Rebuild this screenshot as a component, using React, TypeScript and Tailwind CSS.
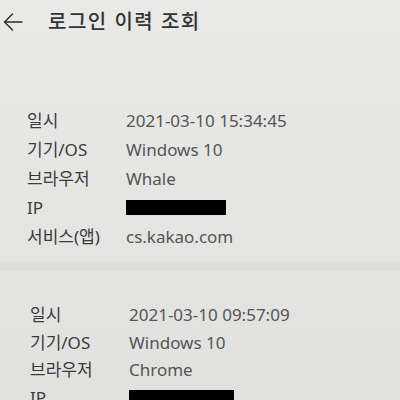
type LoginRecord = {
  time: string;
  device: string;
  browser: string;
  service?: string;
};

const records: LoginRecord[] = [
  { time: "2021-03-10 15:34:45", device: "Windows 10", browser: "Whale", service: "cs.kakao.com" },
  { time: "2021-03-10 09:57:09", device: "Windows 10", browser: "Chrome" },
];

function Row({ label, children, tight }: { label: string; children: React.ReactNode; tight?: boolean }) {
  return (
    <div className={tight ? "flex items-center h-[27.5px]" : "flex items-center h-[29px]"}>
      <div className="w-[99px] shrink-0 text-[#3b3b3b]">{label}</div>
      <div className="text-[#555555]">{children}</div>
    </div>
  );
}

function Masked({ width }: { width: string }) {
  return <div className={`h-[15px] bg-black ${width}`} />;
}

function BackArrow() {
  return (
    <svg width="20" height="20" viewBox="0 0 20 20" fill="none" stroke="#2a2a2a" strokeWidth="1.4" strokeLinecap="round" strokeLinejoin="round">
      <path d="M19 10H1.5" />
      <path d="M9.5 2 1.5 10l8 8" />
    </svg>
  );
}

export default function App() {
  return (
    <div
      className="w-[400px] h-[400px] overflow-hidden bg-gradient-to-b from-[#e9e9e8] to-[#e1e1df]"
      style={{ fontFamily: '"Noto Sans", "Noto Sans CJK KR", sans-serif' }}
    >
      {/* Header */}
      <div className="flex items-center h-[44px] pl-[3px]">
        <BackArrow />
        <h1 className="ml-[25px] text-[20px] font-medium text-[#333333] tracking-[1.5px]">
          로그인 이력 조회
        </h1>
      </div>

      <div className="pt-[62px] pl-[27px] text-[17px]">
        <Row label="일시">{records[0].time}</Row>
        <Row label="기기/OS">{records[0].device}</Row>
        <Row label="브라우저">{records[0].browser}</Row>
        <Row label="IP">
          <Masked width="w-[100px]" />
        </Row>
        <Row label="서비스(앱)">{records[0].service}</Row>
      </div>

      <div className="mt-[10px] h-[10px] bg-[#dededc]" />

      <div className="pt-[30px] pl-[30px] text-[17px]">
        <Row label="일시" tight>{records[1].time}</Row>
        <Row label="기기/OS" tight>{records[1].device}</Row>
        <Row label="브라우저" tight>{records[1].browser}</Row>
        <Row label="IP" tight>
          <Masked width="w-[105px]" />
        </Row>
      </div>
    </div>
  );
}
